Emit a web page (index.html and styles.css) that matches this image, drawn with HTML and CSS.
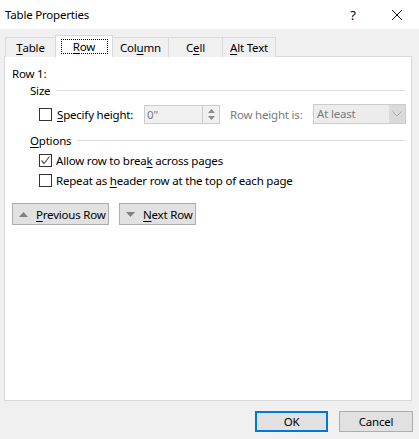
FILE: index.html
```html
<!DOCTYPE html>
<html>
<head>
<meta charset="utf-8">
<link rel="stylesheet" href="styles.css">
</head>
<body>
<div class="dialog">
  <div class="titlebar">
    <span class="title">Table Properties</span>
    <span class="help">?</span>
    <span class="close"><svg width="12" height="12" viewBox="0 0 12 12"><path d="M1 1L11 11M11 1L1 11" stroke="#111" stroke-width="1" fill="none"/></svg></span>
  </div>
  <div class="body">
    <div class="tabs">
      <div class="tab tab-table"><u>T</u>able</div>
      <div class="tab tab-row active"><span class="focus"><u>R</u>ow</span></div>
      <div class="tab tab-column">Col<u>u</u>mn</div>
      <div class="tab tab-cell">C<u>e</u>ll</div>
      <div class="tab tab-alt"><u>A</u>lt Text</div>
    </div>
    <div class="panel">
      <div class="row-label">Row 1:</div>
      <div class="group-head size-head"><span>Size</span><div class="rule"></div></div>
      <div class="spec-row">
        <span class="cb"></span>
        <span class="spec-label"><u>S</u>pecify height:</span>
        <div class="spin">
          <div class="spin-val">0"</div>
          <div class="spin-btns">
            <svg width="7" height="4" viewBox="0 0 7 4"><path d="M0 4L3.5 0L7 4Z" fill="#8a8a8a"/></svg>
            <svg width="7" height="4" viewBox="0 0 7 4"><path d="M0 0L3.5 4L7 0Z" fill="#8a8a8a"/></svg>
          </div>
        </div>
        <span class="rh-label">Row height is:</span>
        <div class="select">
          <div class="sel-val">At least</div>
          <div class="sel-btn"><svg width="10" height="6" viewBox="0 0 10 6"><path d="M0.5 0.5L5 5L9.5 0.5" stroke="#a8a8a8" fill="none" stroke-width="1"/></svg></div>
        </div>
      </div>
      <div class="group-head opt-head"><span><u>O</u>ptions</span><div class="rule"></div></div>
      <div class="check-row">
        <span class="cb checked"><svg width="11" height="11" viewBox="0 0 11 11"><path d="M1.5 5.5L4 8.5L9.5 1.5" stroke="#555" stroke-width="1.2" fill="none"/></svg></span>
        <span>Allow row to brea<u>k</u> across pages</span>
      </div>
      <div class="check-row">
        <span class="cb"></span>
        <span>Repeat as <u>h</u>eader row at the top of each page</span>
      </div>
      <div class="nav">
        <button class="btn nav-prev"><svg width="9" height="5" viewBox="0 0 9 5"><path d="M0 5L4.5 0L9 5Z" fill="#808080"/></svg><span><u>P</u>revious Row</span></button>
        <button class="btn nav-next"><svg width="9" height="5" viewBox="0 0 9 5"><path d="M0 0L4.5 5L9 0Z" fill="#808080"/></svg><span><u>N</u>ext Row</span></button>
      </div>
    </div>
    <div class="footer">
      <button class="btn ok">OK</button>
      <button class="btn cancel">Cancel</button>
    </div>
  </div>
</div>
</body>
</html>
```
FILE: styles.css
```css
html, body {
  margin: 0;
  padding: 0;
}
body {
  width: 419px;
  height: 439px;
  overflow: hidden;
  font-family: "Noto Sans", "Open Sans", sans-serif;
  font-size: 11.5px;
  letter-spacing: -0.2px;
  color: #000;
}
u { text-decoration: underline; text-underline-offset: 2px; }
.dialog {
  width: 419px;
  height: 439px;
  display: flex;
  flex-direction: column;
}
.titlebar {
  height: 29px;
  background: #fff;
  display: flex;
  align-items: center;
  padding-left: 5px;
  box-sizing: border-box;
}
.title { flex: 1; font-size: 11.5px; }
.help { width: 14px; font-size: 13px; margin-right: 31px; text-align: center; }
.close { width: 12px; height: 12px; margin-right: 16px; display: flex; }
.body {
  flex: 1;
  background: #f0f0f0;
  display: flex;
  flex-direction: column;
}
.tabs {
  display: flex;
  align-items: flex-end;
  height: 21px;
  margin-top: 7px;
  padding-left: 5px;
  position: relative;
  z-index: 1;
  margin-bottom: -1px;
}
.tab {
  height: 20px;
  box-sizing: border-box;
  border: 1px solid #d9d9d9;
  border-bottom: none;
  background: #f0f0f0;
  display: flex;
  align-items: center;
  justify-content: center;
  margin-right: -1px;
  padding-bottom: 1px;
  white-space: nowrap;
}
.tab-table { width: 51px; }
.tab-row { width: 58px; }
.tab-column { width: 57px; }
.tab-cell { width: 55px; }
.tab-alt { width: 54px; }
.tab.active {
  height: 22px;
  background: #fff;
  position: relative;
  z-index: 2;
  padding-bottom: 0;
}
.focus {
  border: 1px dotted #000;
  width: 47px;
  height: 15px;
  box-sizing: border-box;
  display: flex;
  align-items: center;
  justify-content: center;
}
.panel {
  height: 345px;
  margin: 0 7px 0 4px;
  border: 1px solid #d9d9d9;
  background: #fff;
  box-sizing: border-box;
  padding: 8px 0 0 7px;
  display: flex;
  flex-direction: column;
}
.row-label { height: 17px; line-height: 17px; }
.group-head {
  display: flex;
  align-items: center;
  height: 16px;
  padding-left: 18px;
  margin-right: 6px;
}
.group-head span { margin-right: 6px; }
.rule { flex: 1; height: 1px; background: #dcdcdc; }
.spec-row {
  display: flex;
  align-items: center;
  height: 20px;
  margin-top: 6px;
  padding-left: 27px;
  white-space: nowrap;
}
.cb {
  width: 13px;
  height: 13px;
  border: 1px solid #333;
  box-sizing: border-box;
  background: #fff;
  display: inline-flex;
  align-items: center;
  justify-content: center;
  flex: none;
}
.spec-label { margin-left: 5px; width: 87px; }
.spin {
  width: 76px;
  height: 19px;
  border: 1px solid #cccccc;
  box-sizing: border-box;
  background: #f0f0f0;
  display: flex;
}
.spin-val { flex: 1; color: #7a7a7a; padding-left: 2px; line-height: 17px; }
.spin-btns {
  width: 16px;
  border-left: 1px solid #cccccc;
  display: flex;
  flex-direction: column;
  align-items: center;
  justify-content: space-evenly;
}
.rh-label { margin-left: 10px; width: 83px; color: #7a7a7a; }
.select {
  width: 93px;
  height: 20px;
  border: 1px solid #cccccc;
  box-sizing: border-box;
  background: #ececec;
  display: flex;
}
.sel-val { flex: 1; color: #7a7a7a; padding-left: 3px; line-height: 18px; }
.sel-btn {
  width: 16px;
  background: #dadada;
  display: flex;
  align-items: center;
  justify-content: center;
}
.opt-head { margin-top: 8px; }
.check-row {
  display: flex;
  align-items: center;
  height: 20px;
  padding-left: 27px;
  gap: 4px;
  white-space: nowrap;
}
.opt-head + .check-row { margin-top: 2px; }
.nav {
  display: flex;
  gap: 10px;
  margin-top: 13px;
  padding-left: 0;
}
.btn {
  font-family: inherit;
  font-size: 11.5px;
  letter-spacing: -0.2px;
  color: #000;
  background: #e1e1e1;
  border: 1px solid #adadad;
  box-sizing: border-box;
  padding: 0;
  margin: 0;
  white-space: nowrap;
}
.nav .btn {
  height: 22px;
  display: flex;
  align-items: center;
  padding-left: 6px;
  gap: 8px;
}
.nav-prev { width: 97px; }
.nav-next { width: 77px; }
.footer {
  display: flex;
  justify-content: flex-end;
  padding: 10px 6px 0 0;
  gap: 11px;
}
.footer .btn {
  height: 21px;
}
.ok { width: 73px; border: 2px solid #0078d7; }
.cancel { width: 74px; }
```
